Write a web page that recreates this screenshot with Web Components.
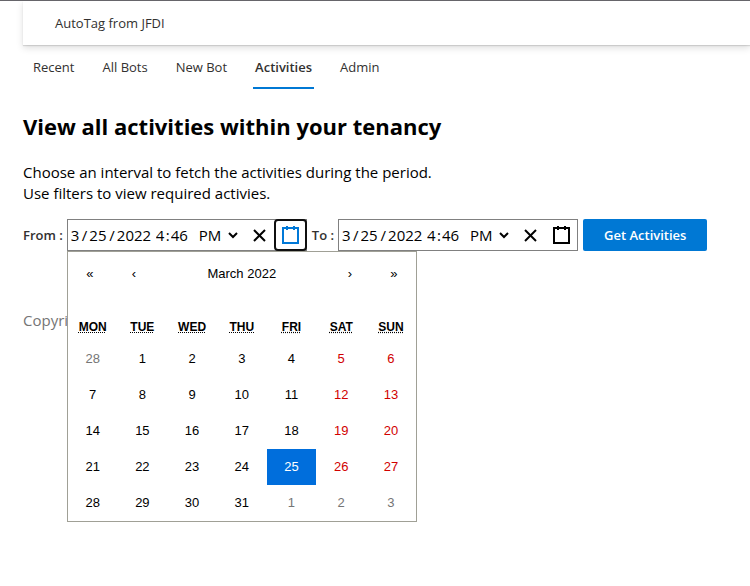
<!DOCTYPE html>
<html lang="en">
<head>
<meta charset="utf-8">
<meta name="viewport" content="width=device-width, initial-scale=1">
<title>AutoTag from JFDI</title>
<style>
  * {
    box-sizing: border-box;
  }
  body {
    min-height: 100vh;
    margin: 0;
    border-top: 1px solid #66656a;
    background: white;
    color: black;
    font-family: "Open Sans", "Noto Sans", sans-serif;
    font-size: 15px;
    line-height: 21px;
  }
  .page {
    padding-left: 23px;
  }
</style>
</head>
<body>
<div class="page">
  <app-header>AutoTag from JFDI</app-header>
  <nav-tabs items="Recent,All Bots,New Bot,Activities,Admin" selected="Activities"></nav-tabs>
  <activities-view>
    <span slot="title">View all activities within your tenancy</span>
    <span slot="intro">Choose an interval to fetch the activities during the period.<br>Use filters to view required activies.</span>
    <datetime-picker slot="filters" label="From :" open></datetime-picker>
    <datetime-picker slot="filters" label="To :"></datetime-picker>
    <primary-button slot="filters">Get Activities</primary-button>
  </activities-view>
  <app-footer>Copyri</app-footer>
</div>

<script>
class AppHeader extends HTMLElement {
  constructor() {
    super()
    this.attachShadow({ mode: "open" })
  }
  connectedCallback() {
    this.shadowRoot.innerHTML = `
      <style>
        :host {
          display: block;
        }
        header {
          padding: 12px 32px 11px;
          color: #323130;
          font-size: 13px;
          box-shadow: 0 1px 1px rgba(0, 0, 0, 0.12), 0 3px 7px rgba(0, 0, 0, 0.13);
        }
      </style>
      <header><slot></slot></header>
    `
  }
}
customElements.define("app-header", AppHeader)

class NavTabs extends HTMLElement {
  constructor() {
    super()
    this.attachShadow({ mode: "open" })
  }
  connectedCallback() {
    const selected = this.getAttribute("selected")
    const tabs = this.getAttribute("items").split(",").map(item => `
      <button role="tab" aria-selected="${item === selected}">${item}</button>
    `).join("")
    this.shadowRoot.innerHTML = `
      <style>
        :host {
          display: block;
        }
        div {
          display: flex;
          gap: 24px;
          padding-left: 8px;
        }
        button {
          height: 44px;
          padding: 2px 2px 0;
          border: 0;
          border-bottom: 2px solid transparent;
          background: none;
          color: #323130;
          font: inherit;
          font-size: 13px;
        }
        button[aria-selected="true"] {
          border-color: #0078d4;
          font-weight: 600;
        }
      </style>
      <div role="tablist">${tabs}</div>
    `
  }
}
customElements.define("nav-tabs", NavTabs)

class ActivitiesView extends HTMLElement {
  constructor() {
    super()
    this.attachShadow({ mode: "open" })
  }
  connectedCallback() {
    this.shadowRoot.innerHTML = `
      <style>
        :host {
          display: block;
        }
        h2 {
          margin: 21px 0 20px;
          font-size: 22px;
          font-weight: 700;
          line-height: 32px;
        }
        p {
          margin: 0 0 15px;
        }
        .filters {
          display: flex;
          align-items: center;
          gap: 5px;
        }
      </style>
      <h2><slot name="title"></slot></h2>
      <p><slot name="intro"></slot></p>
      <div class="filters"><slot name="filters"></slot></div>
    `
  }
}
customElements.define("activities-view", ActivitiesView)

class DatetimePicker extends HTMLElement {
  constructor() {
    super()
    this.attachShadow({ mode: "open" })
  }
  getStyles() {
    return `
      <style>
        * {
          box-sizing: border-box;
        }
        :host {
          display: flex;
          align-items: center;
          gap: 4px;
        }
        label {
          color: #323130;
          font-size: 13px;
          font-weight: 600;
          white-space: nowrap;
        }
        .picker {
          position: relative;
          display: flex;
          align-items: stretch;
          width: 240px;
          height: 32px;
          border: 1px solid gray;
        }
        .fields {
          display: flex;
          flex: 1;
          align-items: center;
          padding: 0 2px;
        }
        input {
          width: 11px;
          padding: 0 1px;
          border: 0;
          background: none;
          color: inherit;
          font: inherit;
        }
        .two {
          width: 20px;
        }
        .year {
          width: 39px;
        }
        .slash {
          padding: 0 1px;
        }
        select {
          width: 46px;
          margin-left: 5px;
          padding: 0;
          border: 0;
          background: none;
          color: inherit;
          font: inherit;
        }
        button {
          display: flex;
          align-items: center;
          padding: 0 6px;
          border: 0;
          background: none;
        }
        svg {
          fill: none;
          stroke: black;
          stroke-width: 2;
        }
        :host([open]) .toggle {
          border-radius: 3px;
          outline: 2px solid #101010;
          outline-offset: -1px;
        }
        :host([open]) .toggle svg {
          stroke: #0078d7;
        }
        month-calendar {
          position: absolute;
          top: calc(100% + 1px);
          left: -1px;
          z-index: 1;
        }
      </style>
    `
  }
  connectedCallback() {
    const open = this.hasAttribute("open")
    this.shadowRoot.innerHTML = `
      ${this.getStyles()}
      <label for="month">${this.getAttribute("label")}</label>
      <div class="picker">
        <div class="fields">
          <input id="month" value="3"><span class="slash">/</span>
          <input class="two" aria-label="Day" value="25"><span class="slash">/</span>
          <input class="year" aria-label="Year" value="2022">
          <input aria-label="Hour" value="4"><span>:</span>
          <input class="two" aria-label="Minute" value="46">
          <select aria-label="AM or PM">
            <option>AM</option>
            <option selected>PM</option>
          </select>
        </div>
        <button aria-label="Clear">
          <svg width="19" height="19" viewBox="0 0 19 19">
            <line x1="4" x2="15" y1="4" y2="15"/>
            <line x1="15" x2="4" y1="4" y2="15"/>
          </svg>
        </button>
        <button class="toggle" aria-label="Calendar" aria-expanded="${open}">
          <svg width="19" height="19" viewBox="0 0 19 19">
            <rect x="2" y="2" width="15" height="15"/>
            <line x1="6" x2="6" y1="0" y2="4"/>
            <line x1="13" x2="13" y1="0" y2="4"/>
          </svg>
        </button>
        ${open ? "<month-calendar></month-calendar>" : ""}
      </div>
    `
  }
}
customElements.define("datetime-picker", DatetimePicker)

class MonthCalendar extends HTMLElement {
  constructor() {
    super()
    this.attachShadow({ mode: "open" })
  }
  getRows() {
    let rows = ""
    for (let week = 0; week < 5; week++) {
      rows += "<tr>"
      for (let col = 0; col < 7; col++) {
        const date = new Date(2022, 1, 28 + week * 7 + col)
        let type = ""
        if (date.getMonth() !== 2) type = "other"
        else if (date.getDate() === 25) type = "active"
        else if (col > 4) type = "weekend"
        rows += `<td><button class="${type}">${date.getDate()}</button></td>`
      }
      rows += "</tr>"
    }
    return rows
  }
  getStyles() {
    return `
      <style>
        * {
          box-sizing: border-box;
        }
        :host {
          display: block;
          box-sizing: border-box;
          width: 350px;
          border: 1px solid #a0a096;
          background: white;
          font-family: "Liberation Sans", Arial, sans-serif;
          line-height: 16px;
        }
        nav {
          display: flex;
          height: 44px;
          margin-bottom: 16px;
        }
        button {
          border: 0;
          padding: 0;
          background: none;
          color: black;
          font: inherit;
          font-size: 13px;
        }
        nav button {
          width: 44px;
        }
        nav .title {
          flex: 1;
        }
        table {
          width: 100%;
          table-layout: fixed;
          border-collapse: collapse;
        }
        th {
          height: 29px;
          padding: 0;
          font-size: 12px;
        }
        abbr {
          text-decoration: underline dotted;
        }
        td {
          padding: 0;
        }
        td button {
          display: block;
          width: 100%;
          height: 36px;
        }
        .weekend {
          color: #d10000;
        }
        .other {
          color: #757575;
        }
        .active {
          background: #006edc;
          color: white;
        }
      </style>
    `
  }
  connectedCallback() {
    const days = ["Monday", "Tuesday", "Wednesday", "Thursday", "Friday", "Saturday", "Sunday"]
    this.shadowRoot.innerHTML = `
      ${this.getStyles()}
      <nav>
        <button>«</button>
        <button>‹</button>
        <button class="title">March 2022</button>
        <button>›</button>
        <button>»</button>
      </nav>
      <table>
        <thead>
          <tr>${days.map(day => `<th><abbr title="${day}">${day.slice(0, 3).toUpperCase()}</abbr></th>`).join("")}</tr>
        </thead>
        <tbody>${this.getRows()}</tbody>
      </table>
    `
  }
}
customElements.define("month-calendar", MonthCalendar)

class PrimaryButton extends HTMLElement {
  constructor() {
    super()
    this.attachShadow({ mode: "open" })
  }
  connectedCallback() {
    this.shadowRoot.innerHTML = `
      <style>
        :host {
          display: block;
        }
        button {
          height: 32px;
          padding: 0 21px;
          border: 0;
          border-radius: 2px;
          background: #0078d4;
          color: white;
          font: inherit;
          font-size: 13px;
          font-weight: 600;
          white-space: nowrap;
        }
      </style>
      <button><slot></slot></button>
    `
  }
}
customElements.define("primary-button", PrimaryButton)

class AppFooter extends HTMLElement {
  constructor() {
    super()
    this.attachShadow({ mode: "open" })
  }
  connectedCallback() {
    this.shadowRoot.innerHTML = `
      <style>
        :host {
          display: block;
          margin-top: 59px;
          color: #757575;
        }
      </style>
      <footer><slot></slot></footer>
    `
  }
}
customElements.define("app-footer", AppFooter)
</script>
</body>
</html>
